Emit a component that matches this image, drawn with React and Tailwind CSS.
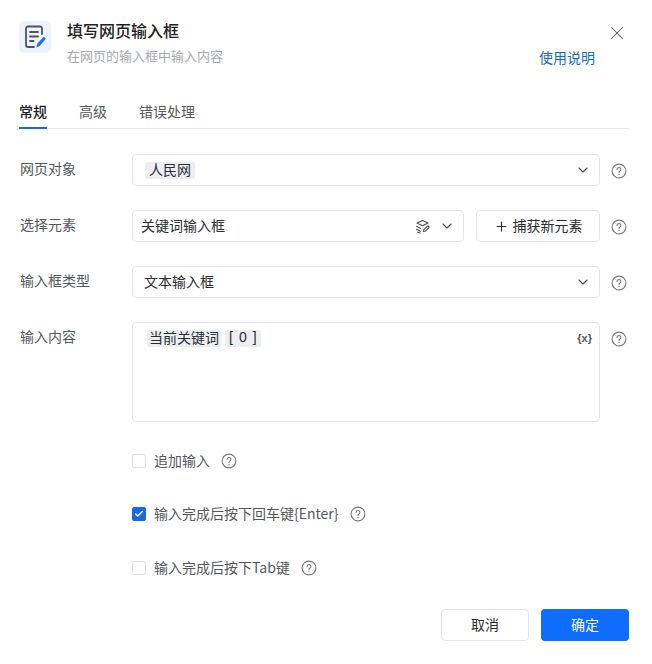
import React from "react";
import { X, ChevronDown, Plus, Check } from "lucide-react";

const FONT = "font-['Noto_Sans_CJK_SC','Noto_Sans',sans-serif]";

function Help() {
  return (
    <svg width="16" height="16" viewBox="0 0 16 16" fill="none" className="shrink-0 text-[#77797f]">
      <circle cx="8" cy="8" r="6.9" stroke="currentColor" strokeWidth="1.1" />
      <path d="M6.1 6.4a1.9 1.9 0 1 1 2.9 1.6c-.7.4-1 .8-1 1.5v.2" stroke="currentColor" strokeWidth="1.1" strokeLinecap="round" />
      <circle cx="8" cy="11.6" r=".7" fill="currentColor" />
    </svg>
  );
}

function Row({ label, children }) {
  return (
    <div className="flex items-start w-[607px]">
      <div className="w-[112px] shrink-0 pt-[2px] text-[14px] leading-[24px] text-[#55585f]">{label}</div>
      <div className="flex-1 min-w-0">{children}</div>
      <div className="w-[27px] flex justify-end pt-[9px]">
        <Help />
      </div>
    </div>
  );
}

function Box({ children, className = "" }) {
  return (
    <div className={`h-8 rounded-[4px] border border-[#e5e6e9] bg-white flex items-center text-[14px] text-[#2b2d33] ${className}`}>
      {children}
    </div>
  );
}

function Chip({ children, className = "" }) {
  return <span className={`bg-[#eceef2] rounded-[2px] h-[17px] pb-[2px] flex items-center text-[14px] text-[#2b2d33] ${className}`}>{children}</span>;
}

function Option({ label, checked }) {
  return (
    <div className="flex items-center h-5">
      <span className={`w-[14px] h-[14px] rounded-[2px] flex items-center justify-center border ${checked ? "bg-[#1669e3] border-[#1669e3]" : "bg-white border-[#e2e3e6]"}`}>
        {checked && <Check size={10} strokeWidth={3.5} className="text-white" />}
      </span>
      <span className="ml-2 pb-[2px] text-[14px] text-[#55585f]">{label}</span>
      <span className="ml-[11px]"><Help /></span>
    </div>
  );
}

export default function App() {
  return (
    <div className={`w-[652px] h-[664px] bg-white overflow-hidden px-5 ${FONT}`}>
      {/* header */}
      <div className="flex h-[70px] pt-[21px]">
        <div className="w-[32px] h-[32px] rounded-[5px] bg-[#eef3fb] flex items-center justify-center -ml-[1px]">
          <svg width="24" height="26" viewBox="0 0 24 26" fill="none">
            <path d="M19 10V4.500A2 2 0 0 0 17 2.500H5A2 2 0 0 0 3 4.500V21a2 2 0 0 0 2 2h6" stroke="#4b5563" strokeWidth="1.800" strokeLinecap="round" />
            <path d="M7 8h8M7 12.500h8M7 17h3.500" stroke="#4b5563" strokeWidth="1.800" strokeLinecap="round" />
            <path d="M13.500 23.500l.6-3.600 5.700-6.400a1.400 1.400 0 0 1 2 0l.3.300a1.400 1.400 0 0 1 0 2l-5.500 6.300-3.100 1.400z" fill="#1e73e8" />
          </svg>
        </div>
        <div className="ml-[16px] flex-1 -mt-[1px]">
          <div className="text-[16px] leading-[20px] font-medium text-[#1f2126]">填写网页输入框</div>
          <div className="mt-[7px] text-[13px] leading-[18px] text-[#a8aaaf]">在网页的输入框中输入内容</div>
        </div>
        <div className="flex flex-col items-end w-[90px] mr-[4px]">
          <X size={22} strokeWidth={1.100} className="text-[#55585f] mt-[1px]" />
          <a className="mt-[4px] mr-[33px] text-[14px] leading-[18px] text-[#1669d3]">使用说明</a>
        </div>
      </div>

      {/* tabs */}
      <div className="flex h-[59px] items-end gap-[32px] text-[14px] text-[#55585f] border-b border-[#e5e6e9] w-[610px] -ml-[1px]">
        <div className="relative pb-[7px] leading-[20px] font-medium text-[#1f2126]">
          常规
          <span className="absolute left-0 right-0 -bottom-px h-[2px] bg-[#1669e3]" />
        </div>
        <div className="pb-[7px] leading-[20px]">高级</div>
        <div className="pb-[7px] leading-[20px]">错误处理</div>
      </div>

      {/* form */}
      <div className="mt-[25px] flex flex-col gap-6">
        <Row label="网页对象">
          <Box className="justify-between pl-3 pr-[8px]">
            <Chip className="px-[4px]">人民网</Chip>
            <ChevronDown size={16} strokeWidth={1.600} className="text-[#4b4e55]" />
          </Box>
        </Row>
        <Row label="选择元素">
          <div className="flex gap-[12px]">
            <Box className="flex-1 justify-between pl-2 pr-[8px]">
              <span className="pb-[2px]">关键词输入框</span>
              <span className="flex items-center gap-[9px] text-[#4b4e55]">
                <svg width="15" height="15" viewBox="0 0 15 15" fill="none" stroke="currentColor" strokeWidth="1.100" strokeLinecap="round" strokeLinejoin="round">
                  <path d="M7.500 1.500l5.500 2.600-5.500 2.600L2 4.100z" />
                  <path d="M1.500 7.300l4 1.900M1.500 10.300l4 1.900M2.500 13l2.500 1" />
                  <path d="M8.500 12.500l.3-1.800 3.400-3.400a1 1 0 0 1 1.500 1.500l-3.400 3.400z" />
                </svg>
                <ChevronDown size={16} strokeWidth={1.600} />
              </span>
            </Box>
            <Box className="w-[124px] justify-center gap-[4px]">
              <Plus size={15} strokeWidth={1.800} />
              <span className="pb-[2px]">捕获新元素</span>
            </Box>
          </div>
        </Row>
        <Row label="输入框类型">
          <Box className="justify-between pl-[11px] pr-[8px]">
            <span className="pb-[2px]">文本输入框</span>
            <ChevronDown size={16} strokeWidth={1.600} className="text-[#4b4e55]" />
          </Box>
        </Row>
        <Row label="输入内容">
          <div className="h-[100px] rounded-[4px] border border-[#e5e6e9] bg-white relative pl-[14px] pt-[7px]">
            <div className="flex gap-[4px]">
              <Chip className="px-[2px]">当前关键词</Chip>
              <Chip className="px-[4px] gap-[6px] font-['Liberation_Sans',sans-serif]"><span>[</span><span>0</span><span>]</span></Chip>
            </div>
            <span className="absolute right-[7px] top-[8px] text-[11px] leading-[14px] font-bold text-[#55585f] font-['Liberation_Sans',sans-serif]">{"{x}"}</span>
          </div>
        </Row>
      </div>

      {/* options */}
      <div className="ml-[112px] mt-[29px] flex flex-col">
        <Option label="追加输入" />
        <div className="mt-[33px]"><Option label="输入完成后按下回车键{Enter}" checked /></div>
        <div className="mt-[34px]"><Option label="输入完成后按下Tab键" /></div>
      </div>

      {/* footer */}
      <div className="mt-[31px] flex justify-end gap-3 w-[609px] text-[14px]">
        <button className="w-[88px] h-8 pb-[1px] rounded-[4px] border border-[#e5e6e9] bg-white text-[#2b2d33]">取消</button>
        <button className="w-[88px] h-8 pb-[1px] rounded-[4px] bg-[#0e6cff] text-white">确定</button>
      </div>
    </div>
  );
}
